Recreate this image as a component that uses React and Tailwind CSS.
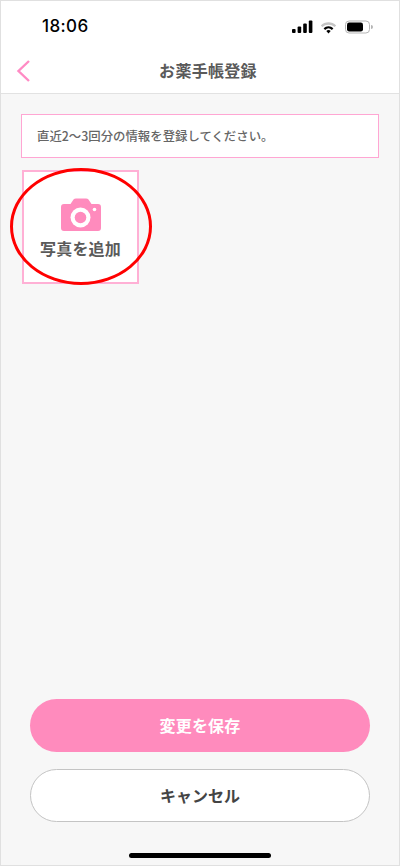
const JP = '"Noto Sans CJK JP","Liberation Sans",sans-serif';

function StatusIcons() {
  return (
    <div className="flex items-center">
      <svg width="21" height="14" viewBox="0 0 21 14" fill="#000">
        <rect x="0" y="9" width="3.6" height="4" rx="1" />
        <rect x="5.6" y="6.5" width="3.6" height="6.5" rx="1" />
        <rect x="11.2" y="3.5" width="3.6" height="9.5" rx="1" />
        <rect x="16.8" y="0.5" width="3.6" height="12.5" rx="1" />
      </svg>
      <svg className="ml-[7px]" width="17" height="13" viewBox="0 0 17 13">
        <path d="M0.8 4.4 A11 11 0 0 1 16.2 4.4 L14.6 6.1 A8.8 8.8 0 0 0 2.4 6.1 Z" fill="#c4c4c4" />
        <path d="M3.6 7.3 A7 7 0 0 1 13.4 7.3 L11.9 8.9 A5 5 0 0 0 5.1 8.9 Z" fill="#000" />
        <path d="M6.3 10 A3.1 3.1 0 0 1 10.7 10 L8.5 12.4 Z" fill="#000" />
      </svg>
      <svg className="ml-[8px]" width="28" height="14" viewBox="0 0 28 14">
        <rect x="0.5" y="1" width="24" height="12" rx="3.6" fill="none" stroke="#b5b5b5" strokeWidth="1" />
        <rect x="2" y="2.5" width="16" height="9" rx="2.2" fill="#000" />
        <path d="M26 5 a2 2 0 0 1 0 4 Z" fill="#b5b5b5" />
      </svg>
    </div>
  );
}

function Camera() {
  return (
    <svg width="40" height="33" viewBox="0 0 40 33">
      <path
        d="M3 6 H9.5 L12.5 1.6 Q13.4 0.4 15 0.4 H25 Q26.6 0.4 27.5 1.6 L30.5 6 H37 Q40 6 40 9 V30 Q40 33 37 33 H3 Q0 33 0 30 V9 Q0 6 3 6 Z"
        fill="#ff8bbd"
      />
      <circle cx="19.5" cy="19.5" r="10" fill="#fff" />
      <circle cx="19.5" cy="19.5" r="5.8" fill="#ff8bbd" />
      <circle cx="33.5" cy="11.5" r="1.8" fill="#fff" />
    </svg>
  );
}

export default function App() {
  return (
    <div
      className="relative w-[400px] h-[866px] flex flex-col bg-[#f7f7f7] border border-[#e0e0e0] overflow-hidden"
      style={{ fontFamily: JP }}
    >
      <header className="bg-white border-b border-[#e2e2e2] h-[93px] shrink-0 flex flex-col">
        <div className="h-[46px] flex items-center justify-between pl-[41px] pr-[26px] pt-[6px]">
          <span className="text-[17px] font-medium text-black tracking-[0.4px]" style={{ fontFamily: '"Inter",sans-serif' }}>18:06</span>
          <StatusIcons />
        </div>
        <div className="relative flex-1 flex items-center justify-center">
          <svg className="absolute left-[15px] top-[12px]" width="15" height="24" viewBox="0 0 15 24" fill="none">
            <path d="M13 2 L2.5 12 L13 22" stroke="#ff8bc4" strokeWidth="2.4" />
          </svg>
          <span className="text-[16px] font-bold text-[#5a5a5a] ml-[16px] tracking-[0.3px]">お薬手帳登録</span>
        </div>
      </header>

      <main className="flex-1 flex flex-col pt-[20px]">
        <div className="mx-[20px] h-[44px] bg-white border border-[#ffa6d3] flex items-center pl-[15px]">
          <span className="text-[12.4px] font-medium text-[#666]">直近2〜3回分の情報を登録してください。</span>
        </div>
        <div className="relative mt-[12px] ml-[21px] w-[117px] h-[114px] bg-white border-2 border-[#ffb0d5] flex flex-col items-center">
          <div className="mt-[26px]"><Camera /></div>
          <span className="mt-[5px] text-[16px] font-bold text-[#5a5a5a] leading-[24px] tracking-[0.2px]">写真を追加</span>
          <div className="absolute left-[-14px] top-[-4px] w-[142px] h-[117px] rounded-[50%] border-[3px] border-[#f00]" />
        </div>
      </main>

      <footer className="shrink-0 flex flex-col items-center">
        <button className="w-[340px] h-[53px] rounded-full bg-[#ff8bbd] text-white text-[16px] font-bold tracking-[0.2px] pb-[2px]">変更を保存</button>
        <button className="mt-[17px] w-[340px] h-[53px] rounded-full bg-white border border-[#c4c4c4] text-[#444] text-[16px] font-bold pb-[2px]">キャンセル</button>
        <div className="mt-[31px] mb-[7px] w-[142px] h-[5px] rounded-full bg-black" />
      </footer>
    </div>
  );
}
